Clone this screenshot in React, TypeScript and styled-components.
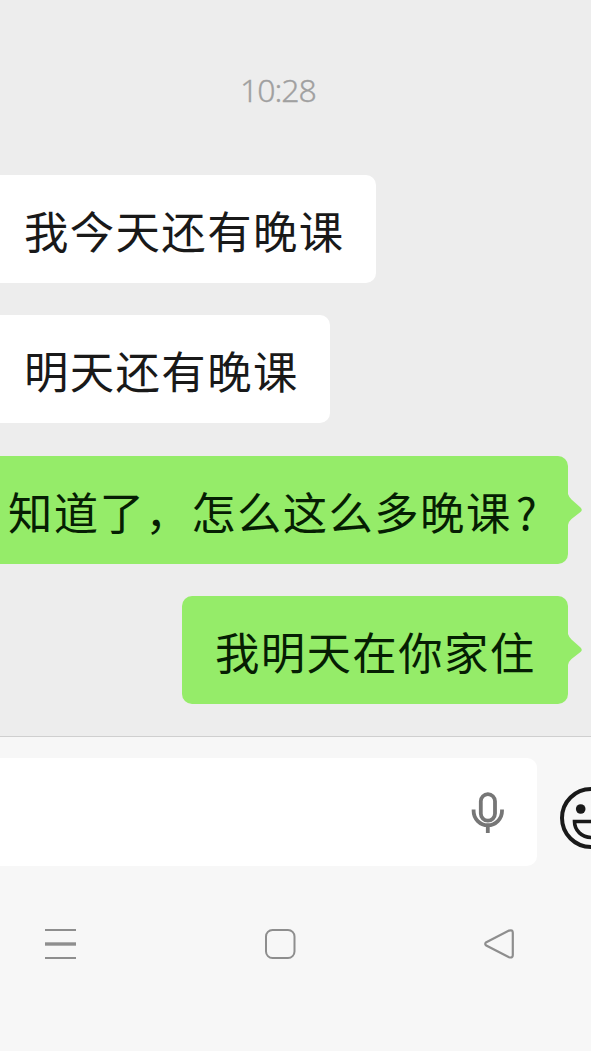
import React from "react";
import styled, { createGlobalStyle } from "styled-components";

const GlobalStyle = createGlobalStyle`
  * { box-sizing: border-box; }
  body { margin: 0; background: #ededed; overflow: hidden; }
`;

const Screen = styled.div`
  width: 591px;
  height: 1051px;
  display: flex;
  flex-direction: column;
  background: #ededed;
  overflow: hidden;
  font-family: "Noto Sans CJK SC", sans-serif;
`;

const Conversation = styled.main`
  height: 736px;
  display: flex;
  flex-direction: column;
  padding-top: 70px;
`;

const Timestamp = styled.time`
  height: 40px;
  margin: 0 0 65px 240px;
  font-family: "Noto Sans", sans-serif;
  font-weight: 300;
  font-size: 32px;
  line-height: 39px;
  letter-spacing: -1px;
  color: #a0a0a0;
  -webkit-text-stroke: 0.3px #a0a0a0;
`;

const Messages = styled.div`
  display: flex;
  flex-direction: column;
  gap: 32.4px;
`;

const Bubble = styled.div<{ $mine?: boolean; $width: number; $clipped?: boolean; $indent: number }>`
  position: relative;
  align-self: ${(p) => (p.$mine ? "flex-end" : "flex-start")};
  width: ${(p) => p.$width}px;
  height: 108px;
  margin-right: ${(p) => (p.$mine ? 23 : 0)}px;
  padding-left: ${(p) => p.$indent}px;
  border-radius: ${(p) => (p.$clipped ? "0 10px 10px 0" : "10px")};
  background: ${(p) => (p.$mine ? "#95ec69" : "#ffffff")};
  color: ${(p) => (p.$mine ? "#061e03" : "#191919")};
  font-size: 44.4px;
  line-height: 109px;
  letter-spacing: 1.4px;
  white-space: nowrap;
`;

const QuestionMark = styled.span`
  margin-left: 4px;
  font-weight: 400;
`;

const Tail = styled.svg`
  position: absolute;
  left: 100%;
  top: 38px;
  margin-left: -1px;
  display: block;
`;

const Composer = styled.footer`
  height: 152px;
  border-top: 1px solid #cfcfcf;
  background: #f7f7f7;
  display: flex;
  padding-top: 21px;
`;

const InputField = styled.div`
  width: 537px;
  height: 108px;
  flex: none;
  display: flex;
  justify-content: flex-end;
  padding: 34px 32px 0 0;
  border-radius: 0 10px 10px 0;
  background: #fff;
`;

const EmojiButton = styled.div`
  flex: none;
  padding: 28px 0 0 22px;
`;

const NavigationBar = styled.nav`
  flex: 1;
  display: flex;
  align-items: flex-start;
  padding: 38px 0 0 43px;
  background: #f7f7f7;
`;

const NavItem = styled.div<{ $width: number }>`
  width: ${(p) => p.$width}px;
  flex: none;
`;

const BubbleTail = () => (
  <Tail width="16" height="32" viewBox="0 0 16 32">
    <path d="M0 0 L1 0 Q2 3 4.5 5.5 L13.5 13.5 Q16 16 13.5 18 L4.5 25 Q2 27 1 31 L0 31 Z" fill="#95ec69" />
  </Tail>
);

export default function App() {
  return (
    <>
      <GlobalStyle />
      <Screen>
        <Conversation>
          <Timestamp>10:28</Timestamp>
          <Messages>
            <Bubble $width={376} $indent={24} $clipped>我今天还有晚课</Bubble>
            <Bubble $width={330} $indent={24} $clipped>明天还有晚课</Bubble>
            <Bubble $mine $width={568} $indent={8} $clipped>
              知道了，怎么这么多晚课<QuestionMark>?</QuestionMark>
              <BubbleTail />
            </Bubble>
            <Bubble $mine $width={386} $indent={33}>
              我明天在你家住
              <BubbleTail />
            </Bubble>
          </Messages>
        </Conversation>
        <Composer>
          <InputField>
            <svg width="34" height="42" viewBox="0 0 34 42" fill="none" stroke="#767676" strokeWidth="3.8">
              <rect x="9.8" y="2.2" width="14.2" height="26.5" rx="7.1" />
              <path d="M2.6 17.5v1.5a14.2 14.2 0 0 0 28.4 0v-1.5M16.8 33.2V41" />
            </svg>
          </InputField>
          <EmojiButton>
            <svg width="64" height="64" viewBox="0 0 64 64" fill="none" stroke="#191919" strokeWidth="4">
              <circle cx="32" cy="32" r="29" />
              <circle cx="21.7" cy="23" r="4.8" fill="#191919" stroke="none" />
              <circle cx="42.3" cy="23" r="4.8" fill="#191919" stroke="none" />
              <path d="M15.5 35.5h33c0 9-7.5 16-16.5 16s-16.5-7-16.5-16z" strokeWidth="3.6" />
            </svg>
          </EmojiButton>
        </Composer>
        <NavigationBar>
          <NavItem $width={220}>
            <svg width="36" height="36" viewBox="0 0 36 36" stroke="#8e8e8e">
              <path d="M2 4h31M2 32h31" strokeWidth="2" />
              <path d="M2 18h31" strokeWidth="3.4" />
            </svg>
          </NavItem>
          <NavItem $width={219}>
            <svg width="36" height="36" viewBox="0 0 36 36" fill="none" stroke="#8e8e8e" strokeWidth="2">
              <rect x="3" y="4" width="28.5" height="28" rx="6.5" />
            </svg>
          </NavItem>
          <NavItem $width={36}>
            <svg width="36" height="36" viewBox="0 0 36 36" fill="none" stroke="#8e8e8e" strokeWidth="2.2">
              <path d="M4.3 16.2 27 4.6q3.8-1.2 3.8 2.2v22.2q0 3.4-3.8 2.2L4.3 19.6q-2.2-1.7 0-3.4z" />
            </svg>
          </NavItem>
        </NavigationBar>
      </Screen>
    </>
  );
}
